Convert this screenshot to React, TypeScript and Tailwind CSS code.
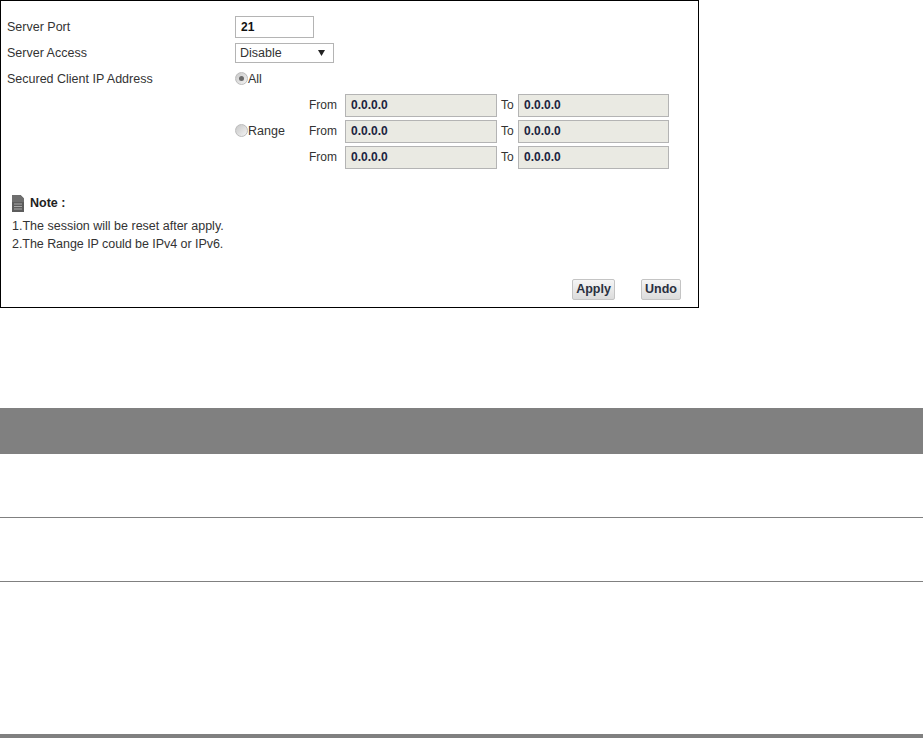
const font = "font-['Liberation_Sans',Arial,sans-serif]";

function Radio({ checked }: { checked?: boolean }) {
  return (
    <span className="-mt-[2px] flex h-[13px] w-[13px] shrink-0 items-center justify-center rounded-full border border-[#bcbcbc] bg-gradient-to-br from-[#c8c8c8] to-[#f4f4f4]">
      {checked && <span className="h-[5px] w-[5px] rounded-full bg-[#6a6a6a]" />}
    </span>
  );
}

function IpInput({ wide }: { wide?: boolean }) {
  return (
    <div
      className={`flex h-[23px] items-center border border-[#b4b4b4] bg-[#eaeae3] pl-[5px] text-[12px] font-bold text-[#1c2440] ${
        wide ? "w-[152px]" : "w-[151px]"
      }`}
    >
      0.0.0.0
    </div>
  );
}

function RangeRow({ range }: { range?: boolean }) {
  return (
    <div className="flex h-[26px] items-center">
      <div className="flex w-[74px] items-center">
        {range && (
          <>
            <Radio />
            <span className="text-[12.5px] text-[#333]">Range</span>
          </>
        )}
      </div>
      <span className="w-[36px] text-[12px] text-[#333]">From</span>
      <IpInput wide />
      <span className="w-[21px] pl-[4px] text-[12px] text-[#333]">To</span>
      <IpInput />
    </div>
  );
}

function NoteIcon() {
  return (
    <svg width="12" height="17" viewBox="0 0 12 17" className="shrink-0">
      <path d="M0 0H8.5L12 3.5V17H0Z" fill="#5c5c5c" />
      <path d="M0 0H8.5L12 3.5V7H0Z" fill="#6e6e6e" />
      <path d="M2 9H10M2 11.5H10M2 14H10" stroke="#a8a8a8" strokeWidth="1" />
    </svg>
  );
}

export default function App() {
  return (
    <div className={`${font} h-[738px] w-[923px] overflow-hidden bg-white`}>
      {/* Settings panel */}
      <div className="flex h-[308px] w-[699px] flex-col border border-black pt-[13px] pl-[6px]">
        <div className="flex h-[26px] items-center">
          <span className="w-[228px] text-[12.5px] text-[#333]">Server Port</span>
          <div className="flex h-[22px] w-[79px] items-center border border-[#b4b4b4] bg-white pl-[5px] text-[12px] font-bold text-[#111]">
            21
          </div>
        </div>
        <div className="flex h-[26px] items-center">
          <span className="w-[228px] text-[12.5px] text-[#333]">Server Access</span>
          <div className="flex h-[20px] w-[99px] items-center justify-between border border-[#b4b4b4] bg-white pr-[8px] pl-[4px] text-[12.5px] text-[#333]">
            Disable
            <svg width="7" height="6" viewBox="0 0 7 6">
              <path d="M0 0H7L3.5 6Z" fill="#222" />
            </svg>
          </div>
        </div>
        <div className="flex h-[26px] items-center">
          <span className="w-[228px] text-[12.5px] text-[#333]">Secured Client IP Address</span>
          <Radio checked />
          <span className="text-[12.5px] text-[#333]">All</span>
        </div>
        <div className="flex flex-col pl-[228px]">
          <RangeRow />
          <RangeRow range />
          <RangeRow />
        </div>

        {/* Note */}
        <div className="mt-[24px] flex items-center gap-[6px] pl-[5px]">
          <NoteIcon />
          <span className="text-[12.5px] font-bold text-[#222]">Note :</span>
        </div>
        <div className="mt-[4px] pl-[5px] text-[12.5px] leading-[18px] text-[#333]">
          <p>1.The session will be reset after apply.</p>
          <p className="tracking-[-0.05px]">2.The Range IP could be IPv4 or IPv6.</p>
        </div>

        {/* Buttons */}
        <div className="mt-[26px] flex justify-end gap-[26px] pr-[17px]">
          <button className="h-[21px] w-[43px] rounded-[2px] border border-[#c4c4c4] bg-gradient-to-b from-[#f5f5f5] to-[#dcdcdc] text-[12.5px] font-bold text-[#2a3040]">
            Apply
          </button>
          <button className="h-[21px] w-[40px] rounded-[2px] border border-[#c4c4c4] bg-gradient-to-b from-[#f5f5f5] to-[#dcdcdc] text-[12.5px] font-bold text-[#2a3040]">
            Undo
          </button>
        </div>
      </div>

      {/* Table below */}
      <div className="mt-[100px] h-[46px] bg-[#808080]" />
      <div className="h-[64px] border-b border-[#808080]" />
      <div className="h-[64px] border-b border-[#808080]" />
      <div className="h-[152px]" />
      <div className="h-[4px] bg-[#808080]" />
    </div>
  );
}
